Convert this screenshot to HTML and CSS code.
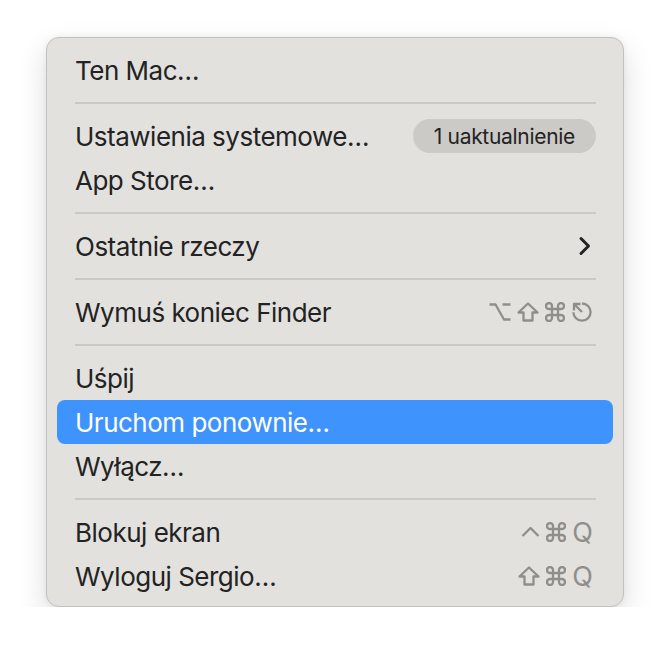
FILE: index.html
```html
<!DOCTYPE html>
<html lang="pl">
<head>
    <meta charset="UTF-8">
    <meta name="viewport" content="width=device-width, initial-scale=1.0">
    <title>Menu Apple</title>
    <link rel="stylesheet" href="styles.css">
</head>
<body>
    <div class="menu">
        <div class="item"><span class="label">Ten Mac…</span></div>
        <div class="sep"></div>
        <div class="item">
            <span class="label">Ustawienia systemowe…</span>
            <span class="badge">1 uaktualnienie</span>
        </div>
        <div class="item"><span class="label">App Store…</span></div>
        <div class="sep"></div>
        <div class="item">
            <span class="label">Ostatnie rzeczy</span>
            <svg class="chevron" width="14" height="20" viewBox="0 0 14 20">
                <path d="M3 2.5 L10.5 10 L3 17.5" />
            </svg>
        </div>
        <div class="sep"></div>
        <div class="item">
            <span class="label">Wymuś koniec Finder</span>
            <span class="keys">
                <svg class="key" width="22" height="20" viewBox="0 0 22 20">
                    <path d="M0.5 2.5 H6.5 L15 17.5 H21.5 M13.5 2.5 H21.5" />
                </svg>
                <svg class="key" width="22" height="20" viewBox="0 0 22 20">
                    <path d="M11 1.5 L20.5 10.5 H15.5 V18.5 H6.5 V10.5 H1.5 Z" />
                </svg>
                <svg class="key" width="20" height="20" viewBox="0 0 20 20">
                    <path d="M7 7 H13 V13 H7 Z M7 7 V4 A3 3 0 1 0 4 7 H7 M13 7 V4 A3 3 0 1 1 16 7 H13 M13 13 H16 A3 3 0 1 1 13 16 V13 M7 13 H4 A3 3 0 1 0 7 16 V13" />
                </svg>
                <svg class="key" width="22" height="22" viewBox="0 0 22 22">
                    <path d="M11 2.5 A8.6 8.6 0 1 1 2.4 11.2 M11 11 L3.5 3.5 M3 9.5 V3 H9.5" />
                </svg>
            </span>
        </div>
        <div class="sep"></div>
        <div class="item"><span class="label">Uśpij</span></div>
        <div class="item active"><span class="label">Uruchom ponownie…</span></div>
        <div class="item"><span class="label">Wyłącz…</span></div>
        <div class="sep"></div>
        <div class="item">
            <span class="label">Blokuj ekran</span>
            <span class="keys">
                <svg class="key" width="19" height="20" viewBox="0 0 19 20">
                    <path d="M1.5 14 L9.5 6 L17.5 14" />
                </svg>
                <svg class="key" width="20" height="20" viewBox="0 0 20 20">
                    <path d="M7 7 H13 V13 H7 Z M7 7 V4 A3 3 0 1 0 4 7 H7 M13 7 V4 A3 3 0 1 1 16 7 H13 M13 13 H16 A3 3 0 1 1 13 16 V13 M7 13 H4 A3 3 0 1 0 7 16 V13" />
                </svg>
                <span class="letter">Q</span>
            </span>
        </div>
        <div class="item">
            <span class="label">Wyloguj Sergio…</span>
            <span class="keys">
                <svg class="key" width="22" height="20" viewBox="0 0 22 20">
                    <path d="M11 1.5 L20.5 10.5 H15.5 V18.5 H6.5 V10.5 H1.5 Z" />
                </svg>
                <svg class="key" width="20" height="20" viewBox="0 0 20 20">
                    <path d="M7 7 H13 V13 H7 Z M7 7 V4 A3 3 0 1 0 4 7 H7 M13 7 V4 A3 3 0 1 1 16 7 H13 M13 13 H16 A3 3 0 1 1 13 16 V13 M7 13 H4 A3 3 0 1 0 7 16 V13" />
                </svg>
                <span class="letter">Q</span>
            </span>
        </div>
    </div>
</body>
</html>
```
FILE: styles.css
```css
body {
    margin: 0;
    padding-top: 37px;
    background-color: #fff;
    font-family: Inter, "Noto Sans", sans-serif;
}
.menu {
    width: 578px;
    height: 570px;
    box-sizing: border-box;
    margin: 0 auto;
    padding: 10px 10px 8px;
    background-color: #e2e1de;
    border: 1px solid #c2c1be;
    border-radius: 13px;
    box-shadow: 0 12px 30px rgba(0, 0, 0, 0.14), 0 0 6px rgba(0, 0, 0, 0.06);
}
.item {
    height: 44px;
    display: flex;
    align-items: center;
    justify-content: space-between;
    padding: 0 20px 0 18px;
    border-radius: 8px;
    color: #232323;
    font-size: 26px;
    letter-spacing: -0.5px;
}
.item .label {
    padding-top: 1px;
}
.item.active {
    background-color: #3f93fd;
    color: #fff;
}
.sep {
    height: 22px;
    display: flex;
    align-items: center;
    padding: 0 17px 0 18px;
}
.sep::before {
    content: "";
    flex: 1;
    height: 2px;
    background-color: #cac9c6;
}
.badge {
    margin-right: -3px;
    height: 34px;
    display: flex;
    align-items: center;
    padding: 0 21px;
    border-radius: 17px;
    background-color: #cbcac6;
    font-size: 21px;
    letter-spacing: -0.3px;
}
.chevron {
    margin-right: 1px;
    fill: none;
    stroke: #232323;
    stroke-width: 3;
    stroke-linecap: round;
    stroke-linejoin: round;
}
.keys {
    display: flex;
    align-items: center;
    gap: 6px;
    color: #8f8e8b;
}
.key {
    fill: none;
    stroke: #8f8e8b;
    stroke-width: 2.3;
    stroke-linejoin: round;
}
.letter {
    font-size: 27px;
    letter-spacing: 0;
    padding-top: 1px;
}
```
